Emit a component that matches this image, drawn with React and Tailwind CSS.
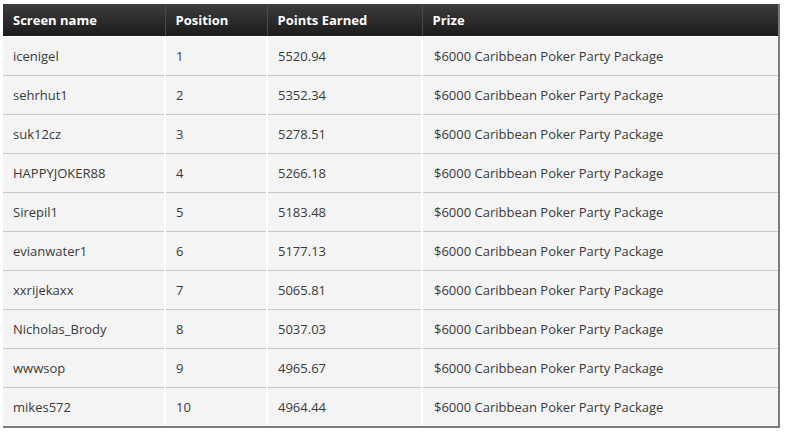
const rows = [
  ["icenigel", "1", "5520.94"],
  ["sehrhut1", "2", "5352.34"],
  ["suk12cz", "3", "5278.51"],
  ["HAPPYJOKER88", "4", "5266.18"],
  ["Sirepil1", "5", "5183.48"],
  ["evianwater1", "6", "5177.13"],
  ["xxrijekaxx", "7", "5065.81"],
  ["Nicholas_Brody", "8", "5037.03"],
  ["wwwsop", "9", "4965.67"],
  ["mikes572", "10", "4964.44"],
];

const prize = "$6000 Caribbean Poker Party Package";

export default function App() {
  return (
    <div className="h-[432px] w-[787px] bg-white pl-[3px] pt-[4px] font-['Open_Sans',sans-serif]">
      <div className="w-[777px] border-b-2 border-r-2 border-[#7a7a7a]">
        <table className="w-full border-collapse text-[13px]">
          <colgroup>
            <col className="w-[162px]" />
            <col className="w-[102px]" />
            <col className="w-[155px]" />
            <col />
          </colgroup>
          <thead className="bg-gradient-to-b from-[#3d3d3d] to-[#1c1c1c] text-left text-white">
            <tr className="h-[32px]">
              <th className="border-r border-[#4a4a4a] pl-[10px] pt-[2px] font-bold">Screen name</th>
              <th className="border-r border-[#4a4a4a] pl-[10px] pt-[2px] font-bold">Position</th>
              <th className="border-r border-[#4a4a4a] pl-[10px] pt-[2px] font-bold">Points Earned</th>
              <th className="pl-[10px] pt-[2px] font-bold">Prize</th>
            </tr>
          </thead>
          <tbody className="bg-[#f4f4f4] text-[#3a3a3a]">
            {rows.map(([name, pos, pts], i) => (
              <tr
                key={name}
                className={
                  i === 0
                    ? "h-[39px] border-t border-white"
                    : "h-[39px] border-t border-[#c9c9c9] shadow-[inset_0_1px_0_#ffffff]"
                }
              >
                <td className="border-r-2 border-white pl-[10px] pt-[2px]">{name}</td>
                <td className="border-r-2 border-white pl-[10px] pt-[2px]">{pos}</td>
                <td className="border-r-2 border-white pl-[10px] pt-[2px]">{pts}</td>
                <td className="pl-[11px] pt-[2px]">{prize}</td>
              </tr>
            ))}
          </tbody>
        </table>
      </div>
    </div>
  );
}
